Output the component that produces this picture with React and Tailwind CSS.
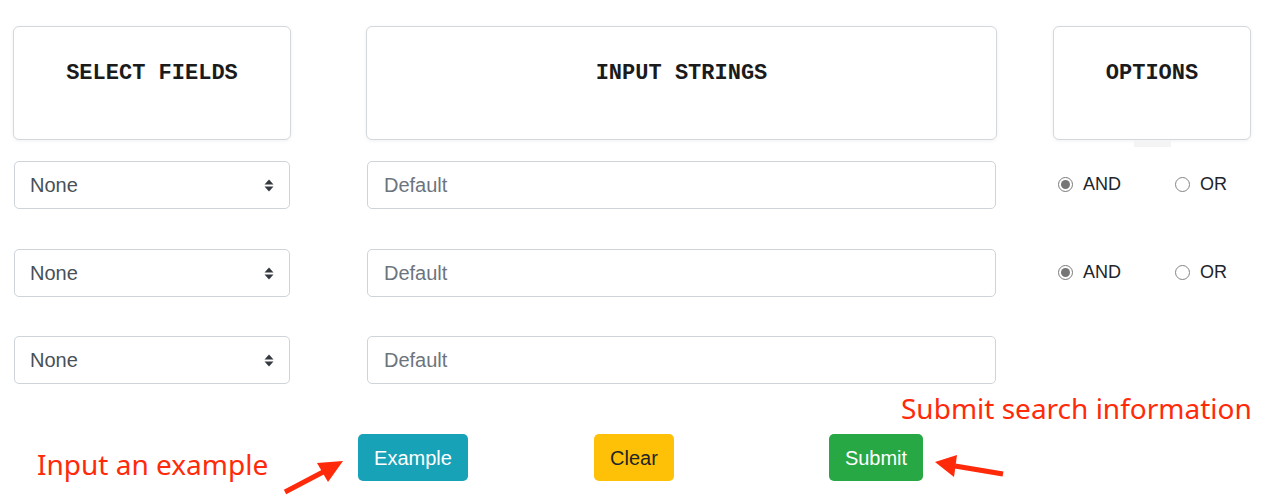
import React from "react";

const sans = { fontFamily: '"Liberation Sans", Arial, sans-serif' };

function SelectBox() {
  return (
    <div className="ml-[14px] w-[276px] h-[48px] border border-[#ced4da] rounded-[5px] bg-white flex items-center justify-between pl-[15px] pr-[15px] text-[20px] text-[#495057] font-['Liberation_Sans',Arial,sans-serif]">
      <span>None</span>
      <svg width="10" height="13" viewBox="0 0 10 13">
        <path d="M5 0.5 L9.5 5.5 L0.5 5.5 Z" fill="#343a40" />
        <path d="M0.5 7.5 L9.5 7.5 L5 12.5 Z" fill="#343a40" />
      </svg>
    </div>
  );
}

function InputBox() {
  return (
    <input
      readOnly
      placeholder="Default"
      className="ml-[77px] w-[629px] h-[48px] border border-[#ced4da] rounded-[5px] bg-white px-[16px] text-[20px] text-[#495057] placeholder:text-[#6c757d] outline-none font-['Liberation_Sans',Arial,sans-serif]"
    />
  );
}

function Radio({ checked, label }) {
  return (
    <div className="flex items-center gap-[10px]">
      <div
        className={
          "w-[15px] h-[15px] rounded-full border flex items-center justify-center bg-white " +
          (checked ? "border-[#7a7a7a]" : "border-[#858585]")
        }
      >
        {checked && <div className="w-[9px] h-[9px] rounded-full bg-[#767676]" />}
      </div>
      <span className="text-[18px] text-[#212529] font-['Liberation_Sans',Arial,sans-serif]">{label}</span>
    </div>
  );
}

function Options() {
  return (
    <div className="ml-[62px] flex items-center -translate-y-[1px]">
      <div className="w-[117px]">
        <Radio checked label="AND" />
      </div>
      <Radio label="OR" />
    </div>
  );
}

function Header({ children, className }) {
  return (
    <div
      className={
        "h-[114px] border border-[#d3d8dd] rounded-[6px] bg-white shadow-[0_1px_4px_rgba(0,0,0,0.06)] flex justify-center pt-[30px] text-[22px] font-bold text-[#1b1b1b] font-['Liberation_Mono','Courier_New',monospace] " +
        className
      }
    >
      {children}
    </div>
  );
}

export default function App() {
  return (
    <div className="relative w-[1265px] h-[499px] bg-white overflow-hidden" style={sans}>
      <div className="flex flex-col pt-[26px]">
        <div className="flex relative">
          <Header className="ml-[13px] w-[278px]">SELECT FIELDS</Header>
          <Header className="ml-[75px] w-[631px]">INPUT STRINGS</Header>
          <Header className="ml-[56px] w-[198px]">OPTIONS</Header>
          <div className="absolute left-[1134px] top-[114px] w-[37px] h-[7px] bg-[#f4f4f4]" />
        </div>

        <div className="flex items-center mt-[21px]">
          <SelectBox />
          <InputBox />
          <Options />
        </div>
        <div className="flex items-center mt-[40px]">
          <SelectBox />
          <InputBox />
          <Options />
        </div>
        <div className="flex items-center mt-[39px]">
          <SelectBox />
          <InputBox />
        </div>

        <div className="flex items-center mt-[50px] text-[20px] font-['Liberation_Sans',Arial,sans-serif]">
          <button className="ml-[358px] w-[110px] h-[47px] rounded-[5px] bg-[#17a2b8] text-white">Example</button>
          <button className="ml-[126px] w-[80px] h-[47px] rounded-[5px] bg-[#ffc107] text-[#212529]">Clear</button>
          <button className="ml-[155px] w-[94px] h-[47px] rounded-[5px] bg-[#28a745] text-white">Submit</button>
        </div>
      </div>

      {/* annotations */}
      <div className="absolute left-[37px] top-[445px] text-[28px] leading-[38px] text-[#ff2a0a] font-['Noto_Sans',sans-serif]">
        Input an example
      </div>
      <div className="absolute left-[901px] top-[389px] text-[28px] leading-[38px] text-[#ff2a0a] font-['Noto_Sans',sans-serif]">
        Submit search information
      </div>
      <svg className="absolute left-0 top-0" width="1265" height="499" viewBox="0 0 1265 499">
        <line x1="285" y1="492" x2="325" y2="471" stroke="#ff2a0a" strokeWidth="5" />
        <path d="M343 461 L317 463 L328 482 Z" fill="#ff2a0a" />
        <line x1="1003" y1="474" x2="955" y2="466" stroke="#ff2a0a" strokeWidth="5" />
        <path d="M935 462 L957 455 L954 477 Z" fill="#ff2a0a" />
      </svg>
    </div>
  );
}
